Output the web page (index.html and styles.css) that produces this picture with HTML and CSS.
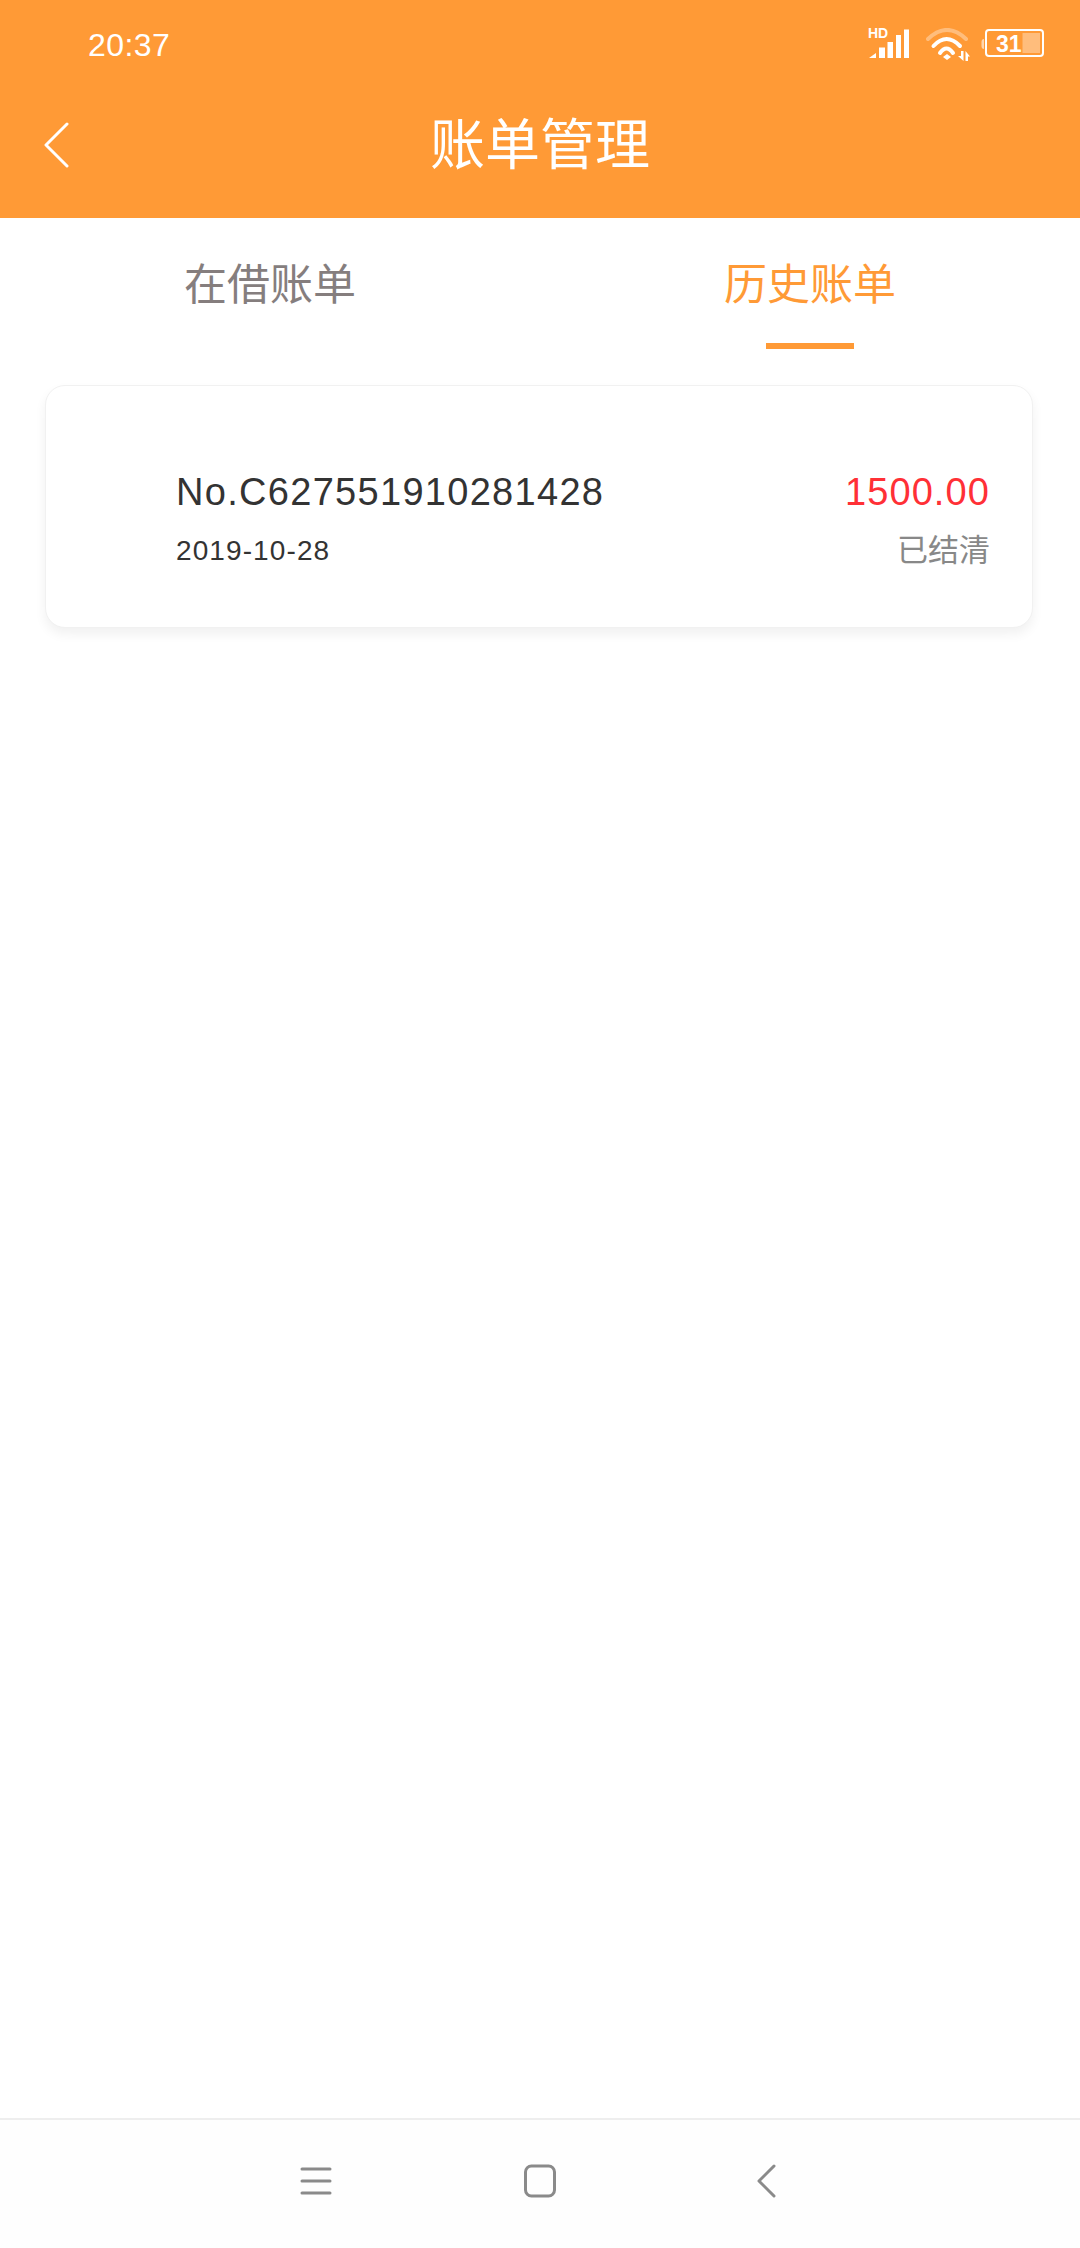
FILE: index.html
```html
<!DOCTYPE html>
<html lang="zh-CN">
<head>
  <meta charset="UTF-8" />
  <meta name="viewport" content="width=device-width, initial-scale=1.0"/>
  <title>账单管理</title>
  <link rel="stylesheet" href="styles.css">
</head>
<body>
  <div class="app">
    <header class="header">
      <div class="status-bar">
        <span class="time">20:37</span>
        <div class="status-icons">
          <svg class="icon-signal" width="44" height="36" viewBox="0 -4 44 36">
            <text class="hd-text" x="1" y="10">HD</text>
            <path class="white" d="M2 30 L9 25 V30 Z"/>
            <rect class="white" x="12" y="19.500" width="6" height="10.500"/>
            <rect class="white" x="20.500" y="14" width="5.500" height="16"/>
            <rect class="white" x="29" y="7" width="5" height="23"/>
            <rect class="white" x="37" y="1.500" width="5" height="28.500"/>
          </svg>
          <svg class="icon-wifi" width="46" height="36" viewBox="0 0 46 36">
            <path class="arc-dim" d="M2 11 Q21 -7 40 11"/>
            <path class="arc" d="M7.500 18 Q20.500 4 34 18"/>
            <path class="arc" d="M14 25 Q20.500 16 27 25"/>
            <path class="white" d="M17 29 L21 26 L25 29 L21 32 Z"/>
            <path class="white" d="M32 28 H35 V23 H37.500 V33 Z M39.500 23 L44 28.500 H42 V33 H39.500 Z"/>
          </svg>
          <svg class="icon-battery" width="64" height="32" viewBox="0 0 64 32">
            <path class="white-soft" d="M3 11 V21 Q0.500 21 0.500 18 V14 Q0.500 11 3 11 Z"/>
            <rect class="battery-body" x="5" y="2" width="57" height="26" rx="3"/>
            <rect class="battery-level" x="41.500" y="5" width="17.500" height="20"/>
            <text class="battery-text" x="15" y="24">31</text>
          </svg>
        </div>
      </div>
      <div class="title-bar">
        <div class="back-cell">
          <svg class="back-icon" width="25" height="46" viewBox="0 0 25 46">
            <path d="M23 2 L2 23 L23 44"/>
          </svg>
        </div>
        <h1>账单管理</h1>
        <div></div>
      </div>
    </header>

    <main class="content">
      <div class="tabs">
        <div class="tab">
          <span>在借账单</span>
          <i class="tab-line"></i>
        </div>
        <div class="tab active">
          <span>历史账单</span>
          <i class="tab-line"></i>
        </div>
      </div>

      <div class="bill-card">
        <div class="bill-left">
          <div class="bill-no">No.C627551910281428</div>
          <div class="bill-date">2019-10-28</div>
        </div>
        <div class="bill-right">
          <div class="bill-amount">1500.00</div>
          <div class="bill-status">已结清</div>
        </div>
      </div>
    </main>

    <nav class="nav-bar">
      <svg class="nav-icon" width="32" height="32" viewBox="0 0 32 32">
        <path d="M2 4 H30 M2 16 H30 M2 28 H30"/>
      </svg>
      <svg class="nav-icon" width="32" height="34" viewBox="0 0 32 34">
        <rect x="1.500" y="2" width="29" height="30" rx="6"/>
      </svg>
      <svg class="nav-icon nav-back" width="20" height="34" viewBox="0 0 20 34">
        <path d="M18 2 L3 17 L18 32"/>
      </svg>
    </nav>
  </div>
</body>
</html>
```

FILE: styles.css
```css
* {
  box-sizing: border-box;
}

body {
  margin: 0;
  padding: 0;
  background: #fff;
  font-family: 'Liberation Sans', 'Noto Sans CJK SC', sans-serif;
}

.app {
  display: flex;
  flex-direction: column;
  height: 2248px;
}

/* header */
.header {
  background: #ff9a36;
  color: #fff;
  height: 218px;
}

.status-bar {
  display: flex;
  justify-content: space-between;
  align-items: center;
  height: 90px;
  padding: 0 35px 0 88px;
}

.time {
  font-size: 32px;
  letter-spacing: 0.4px;
}

.status-icons {
  display: flex;
  align-items: flex-start;
  height: 36px;
  margin-top: 2px;
}

.status-icons svg {
  display: block;
}

.icon-signal {
  margin-top: -4px;
}

.icon-wifi {
  margin: 0 9px 0 15px;
}

.white {
  fill: #fff;
}

.white-soft {
  fill: #fff;
  opacity: 0.6;
}

.hd-text {
  fill: #fff;
  font-size: 14px;
  font-weight: bold;
}

.arc,
.arc-dim {
  fill: none;
  stroke: #fff;
  stroke-width: 4;
  stroke-linecap: round;
}

.arc-dim {
  opacity: 0.35;
}

.battery-body {
  fill: none;
  stroke: #fff;
  stroke-width: 2;
}

.battery-level {
  fill: #fff;
  opacity: 0.35;
}

.battery-text {
  fill: #fff;
  font-size: 23px;
  font-weight: bold;
}

.title-bar {
  display: grid;
  grid-template-columns: 1fr auto 1fr;
  align-items: center;
  height: 128px;
  padding-bottom: 18px;
}

.back-cell {
  padding-left: 44px;
}

.back-icon {
  display: block;
}

.back-icon path {
  fill: none;
  stroke: #fff;
  stroke-width: 3;
  stroke-linecap: round;
  stroke-linejoin: round;
}

h1 {
  margin: 0;
  font-size: 55px;
  font-weight: 400;
  line-height: 1.2;
}

/* tabs */
.content {
  flex: 1;
}

.tabs {
  display: flex;
  height: 131px;
}

.tab {
  flex: 1;
  display: flex;
  flex-direction: column;
  align-items: center;
  justify-content: flex-end;
  color: #857e7e;
  font-size: 43px;
}

.tab span {
  line-height: 60px;
  margin-bottom: 28px;
}

.tab-line {
  width: 88px;
  height: 6px;
}

.tab.active {
  color: #ff9a36;
}

.tab.active .tab-line {
  background: #ff9a36;
}

/* bill card */
.bill-card {
  display: flex;
  justify-content: space-between;
  align-items: center;
  height: 243px;
  margin: 36px 47px 0 45px;
  padding: 24px 42px 0 130px;
  background: #fff;
  border: 1px solid #f1f1f1;
  border-radius: 20px;
  box-shadow: 0 6px 12px rgba(0, 0, 0, 0.06);
}

.bill-no {
  color: #333;
  font-size: 38px;
  letter-spacing: 1.3px;
  line-height: 44px;
}

.bill-date {
  color: #333;
  font-size: 28px;
  letter-spacing: 1.100px;
  line-height: 34px;
  margin-top: 20px;
}

.bill-right {
  text-align: right;
}

.bill-amount {
  color: #ff3036;
  font-size: 38px;
  letter-spacing: 1.100px;
  line-height: 44px;
}

.bill-status {
  color: #888;
  font-size: 31px;
  line-height: 34px;
  margin-top: 20px;
}

/* system nav */
.nav-bar {
  display: flex;
  align-items: center;
  gap: 192px;
  height: 130px;
  padding: 0 0 6px 300px;
  border-top: 2px solid #eee;
  background: #fefefe;
}

.nav-icon {
  display: block;
}

.nav-back {
  margin-left: 8px;
}

.nav-icon path,
.nav-icon rect {
  fill: none;
  stroke: #8a8a8a;
  stroke-width: 3;
  stroke-linecap: round;
  stroke-linejoin: round;
}
```
